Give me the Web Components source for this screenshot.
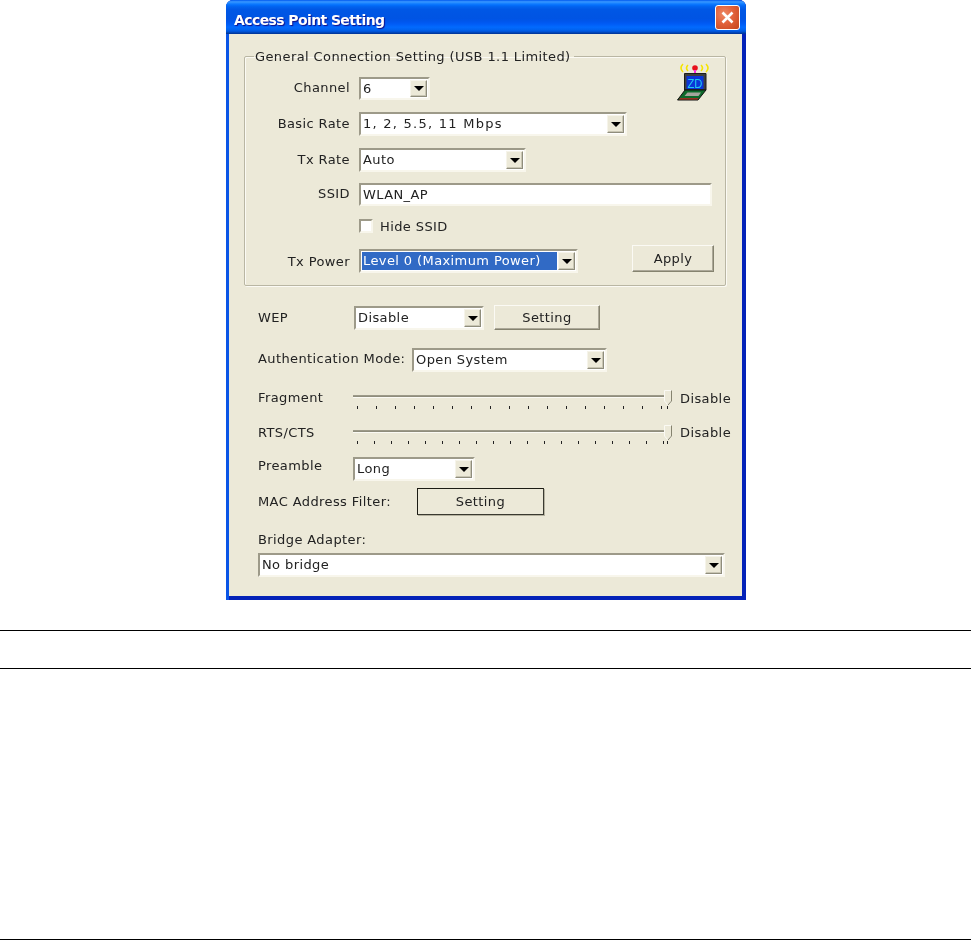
<!DOCTYPE html>
<html>
<head>
<meta charset="utf-8">
<title>Access Point Setting</title>
<style>
  html, body { margin: 0; padding: 0; background: #fff; }
  body { font: 13px "DejaVu Sans", sans-serif; letter-spacing: 0.4px; color: #222; width: 971px; height: 940px; overflow: hidden; }
</style>
</head>
<body>
<doc-page>
  <xp-window caption="Access Point Setting">
    <xp-group legend="General Connection Setting (USB 1.1 Limited)">
      <zd-logo slot="corner"></zd-logo>
      <xp-row label="Channel" labelwidth="104" height="23" top="0"><xp-combo w="71">6</xp-combo></xp-row>
      <xp-row label="Basic Rate" labelwidth="104" height="24" top="12"><xp-combo w="268" style="letter-spacing:1.25px">1, 2, 5.5, 11 Mbps</xp-combo></xp-row>
      <xp-row label="Tx Rate" labelwidth="104" height="24" top="12"><xp-combo w="167">Auto</xp-combo></xp-row>
      <xp-row label="SSID" labelwidth="104" height="23" top="11"><xp-combo w="353" noarrow>WLAN_AP</xp-combo></xp-row>
      <xp-row labelwidth="104" height="24" top="8"><xp-check>Hide SSID</xp-check></xp-row>
      <xp-row label="Tx Power" labelwidth="104" height="24" top="11" lh="25">
        <xp-combo w="219" selected>Level 0 (Maximum Power)</xp-combo>
        <xp-button w="82" h="27" left="54" lift="4">Apply</xp-button>
      </xp-row>
    </xp-group>

    <xp-row label="WEP" labelwidth="96" align="left" height="24" top="20" inset="29" gap="0">
      <xp-combo w="130">Disable</xp-combo>
      <xp-button w="106" h="25" left="10" lift="1">Setting</xp-button>
    </xp-row>
    <xp-row label="Authentication Mode:" labelwidth="154" align="left" height="24" top="18" inset="29" gap="0" lh="21">
      <xp-combo w="195">Open System</xp-combo>
    </xp-row>
    <xp-row label="Fragment" labelwidth="95" align="left" height="22" top="17" inset="29" gap="0" lh="17">
      <xp-slider step="19" textlh="20">Disable</xp-slider>
    </xp-row>
    <xp-row label="RTS/CTS" labelwidth="95" align="left" height="22" top="13" inset="29" gap="0" lh="17">
      <xp-slider step="17" textlh="18">Disable</xp-slider>
    </xp-row>
    <xp-row label="Preamble" labelwidth="95" align="left" height="24" top="11" inset="29" gap="0" lh="17">
      <xp-combo w="122">Long</xp-combo>
    </xp-row>
    <xp-row label="MAC Address Filter:" labelwidth="159" align="left" height="27" top="7" inset="29" gap="0" lh="28">
      <xp-button w="127" h="27" flat>Setting</xp-button>
    </xp-row>
    <xp-row label="Bridge Adapter:" labelwidth="200" align="left" height="18" top="17" inset="29" gap="0" lh="15"></xp-row>
    <xp-row height="24" top="3" inset="29" gap="0"><xp-combo w="467">No bridge</xp-combo></xp-row>
  </xp-window>
  <doc-rules></doc-rules>
</doc-page>

<script>
class DocPage extends HTMLElement {
  constructor() {
    super();
    this.attachShadow({ mode: "open" }).innerHTML = `
      <style>
        :host { display: block; }
        .frame { margin-left: 226px; width: 520px; }
      </style>
      <div class="frame"><slot></slot></div>`;
  }
}

class DocRules extends HTMLElement {
  constructor() {
    super();
    this.attachShadow({ mode: "open" }).innerHTML = `
      <style>
        :host { display: block; width: 971px; margin-left: -226px; margin-top: 30px; }
        div { border-top: 1px solid #000; }
        .a { height: 37px; }
        .b { height: 270px; }
      </style>
      <div class="a"></div><div class="b"></div><div></div>`;
  }
}

class XpWindow extends HTMLElement {
  constructor() {
    super();
    this.attachShadow({ mode: "open" }).innerHTML = `
      <style>
        /* the shot is a scaled-up capture, so everything in it is a little soft */
        :host { display: block; width: 520px; height: 600px; box-sizing: border-box; filter: blur(0.3px); }
        .win {
          height: 600px; box-sizing: border-box; display: flex; flex-direction: column;
          border-radius: 7px 7px 0 0; overflow: hidden; background: #0422b8;
          box-shadow: inset 3px 0 0 #0a55e6, inset -4px 0 0 #0422b8;
        }
        .title {
          height: 34px; flex: none; display: flex; align-items: center; box-sizing: border-box;
          padding: 5px 6px 0 8px; justify-content: space-between;
          background: linear-gradient(#0058ee 0%, #3593ff 5%, #288eff 8%, #127dff 11%, #036ffc 15%, #0262ee 20%, #0057e5 28%, #0054e3 54%, #0055eb 62%, #005bf5 70%, #026afe 80%, #0062ef 88%, #0052d6 93%, #0040ab 97%, #003092 100%);
          color: #fff; font: bold 14px "DejaVu Sans", sans-serif; letter-spacing: -0.6px;
          text-shadow: 1px 1px 1px #0f1089;
        }
        .close {
          width: 25px; height: 25px; box-sizing: border-box; border: 1px solid #fff; border-radius: 3px;
          margin-top: -5px;
          background: radial-gradient(circle at 35% 35%, #ee8a68 0%, #e2623a 45%, #c4441c 100%);
          display: flex; align-items: center; justify-content: center;
        }
        .body {
          flex: 1; margin: 0 4px 4px 3px; background: #ece9d8; display: flex; flex-direction: column;
        }
      </style>
      <div class="win">
        <div class="title">
          <span>${this.getAttribute("caption")}</span>
          <div class="close"><svg width="15" height="15" viewBox="0 0 15 15"><path d="M2.5 2.5 L12.5 12.5 M12.5 2.5 L2.5 12.5" stroke="#fff" stroke-width="2.6" fill="none"/></svg></div>
        </div>
        <div class="body"><slot></slot></div>
      </div>`;
  }
}

class XpGroup extends HTMLElement {
  constructor() {
    super();
    this.attachShadow({ mode: "open" }).innerHTML = `
      <style>
        :host { display: block; margin: 15px 0 0 15px; width: 482px; position: relative; }
        fieldset {
          margin: 0; padding: 13px 0 0 1px; height: 237px; box-sizing: border-box;
          border: 1px solid #b9b6a3; border-radius: 2px;
          box-shadow: inset 1px 1px 0 #fbfaf4, 1px 1px 0 #fbfaf4;
        }
        legend { padding: 0 3px 0 1px; margin-left: 8px; line-height: 15px; }
        .corner { position: absolute; left: 433px; top: 14px; }
      </style>
      <fieldset>
        <legend>${this.getAttribute("legend")}</legend>
        <slot></slot>
      </fieldset>
      <div class="corner"><slot name="corner"></slot></div>`;
  }
}

class XpRow extends HTMLElement {
  constructor() {
    super();
    const label = this.getAttribute("label") || "";
    const lw = this.getAttribute("labelwidth") || 0;
    const gap = this.getAttribute("gap") || 9;
    const align = this.getAttribute("align") === "left" ? "left" : "right";
    const inset = this.getAttribute("inset") || 0;
    const lh = this.getAttribute("lh") || this.getAttribute("height") - 1;
    this.attachShadow({ mode: "open" }).innerHTML = `
      <style>
        :host {
          display: flex; align-items: flex-start; height: ${this.getAttribute("height")}px;
          margin-top: ${this.getAttribute("top")}px; margin-left: ${inset}px;
        }
        .label { width: ${lw}px; flex: none; text-align: ${align}; line-height: ${lh}px; white-space: nowrap; }
        .gap { width: ${gap}px; flex: none; }
        .rest { display: flex; align-items: flex-start; height: 100%; }
      </style>
      <span class="label">${label}</span><span class="gap"></span>
      <div class="rest"><slot></slot></div>`;
  }
}

class XpCombo extends HTMLElement {
  constructor() {
    super();
    const sel = this.hasAttribute("selected");
    const arrow = !this.hasAttribute("noarrow");
    this.attachShadow({ mode: "open" }).innerHTML = `
      <style>
        :host { display: block; width: ${this.getAttribute("w")}px; height: 100%; }
        .box {
          height: 100%; box-sizing: border-box; display: flex; background: #fff;
          border: 2px solid; border-color: #9d9a89 #f8f6ec #f8f6ec #9d9a89; padding: 1px;
        }
        .val {
          flex: 1; min-width: 0; white-space: nowrap; overflow: hidden; padding-left: 1px;
          line-height: 18px; color: #222; margin: 0 1px 0 0;
        }
        .sel { background: #316ac5; color: #fff; }
        .btn {
          width: 17px; flex: none; box-sizing: border-box; background: #ece9d8;
          border: 1px solid; border-color: #f6f4ea #8f8d7c #8f8d7c #f6f4ea;
          box-shadow: inset -1px -1px 0 #c9c6b4;
          display: flex; align-items: center; justify-content: center;
        }
        .tri { width: 0; height: 0; border: 5px solid transparent; border-top: 5px solid #000; border-bottom: 0; }
      </style>
      <div class="box">
        <div class="val${sel ? " sel" : ""}"><slot></slot></div>
        ${arrow ? '<div class="btn"><div class="tri"></div></div>' : ""}
      </div>`;
  }
}

class XpCheck extends HTMLElement {
  constructor() {
    super();
    this.attachShadow({ mode: "open" }).innerHTML = `
      <style>
        :host { display: flex; align-items: center; gap: 7px; height: 100%; }
        i {
          display: block; width: 14px; height: 14px; box-sizing: border-box; background: #fff;
          border: 2px solid; border-color: #9d9a89 #f8f6ec #f8f6ec #9d9a89;
        }
      </style>
      <i></i><span><slot></slot></span>`;
  }
}

class XpButton extends HTMLElement {
  constructor() {
    super();
    const w = this.getAttribute("w"), h = this.getAttribute("h");
    const flat = this.hasAttribute("flat");
    this.attachShadow({ mode: "open" }).innerHTML = `
      <style>
        :host {
          display: block; flex: none; width: ${w}px; height: ${h}px;
          margin-left: ${this.getAttribute("left") || 0}px; margin-top: -${this.getAttribute("lift") || 0}px;
        }
        div {
          height: 100%; box-sizing: border-box; display: flex; align-items: center; justify-content: center;
          background: #ece9d8; color: #222;
          ${flat
            ? "border: 1px solid #1c1c14; border-right-color:#3a3a30; border-bottom-color:#3a3a30; box-shadow: 1px 1px 0 #b5b29f;"
            : "border: 1px solid; border-color: #fbfaf4 #85836f #85836f #fbfaf4; box-shadow: inset -1px -1px 0 #aca899;"}
        }
      </style>
      <div><slot></slot></div>`;
  }
}

class XpSlider extends HTMLElement {
  constructor() {
    super();
    const step = +this.getAttribute("step");
    let ticks = "";
    for (let x = 4; x < 312; x += step) ticks += `<b style="left:${x}px"></b>`;
    ticks += `<b style="left:314px"></b>`;
    this.attachShadow({ mode: "open" }).innerHTML = `
      <style>
        :host { display: flex; align-items: flex-start; }
        .track { width: 317px; height: 22px; position: relative; flex: none; }
        .groove { position: absolute; left: 0; right: 0; top: 6px; height: 1px; background: #9d9a89; box-shadow: 0 1px 0 #8f8d7c, 0 2px 0 #fbfaf4; }
        b { position: absolute; top: 17px; width: 1px; height: 3px; background: #222; }
        svg { position: absolute; left: 311px; top: 1px; }
        .text { margin-left: 10px; line-height: ${this.getAttribute("textlh")}px; }
      </style>
      <div class="track">
        <div class="groove"></div>
        ${ticks}
        <svg width="9" height="16" viewBox="0 0 9 16"><path d="M0.5 0.5 H7.5 V11 L4 15 L0.5 11 Z" fill="#ece9d8" stroke="#fbfaf4"/><path d="M7.5 0.5 V11 L4 15" fill="none" stroke="#85836f"/></svg>
      </div>
      <span class="text"><slot></slot></span>`;
  }
}

class ZdLogo extends HTMLElement {
  constructor() {
    super();
    this.attachShadow({ mode: "open" }).innerHTML = `
      <style>:host { display: block; width: 34px; height: 40px; }</style>
      <svg width="34" height="40" viewBox="0 0 34 40">
        <g fill="none" stroke="#f5e400" stroke-width="1.6">
          <path d="M6 1 Q2 5 6 9"/><path d="M11 2 Q8 5 11 8"/>
          <path d="M24 2 Q27 5 24 8"/><path d="M29 1 Q33 5 29 9"/>
        </g>
        <circle cx="18" cy="5" r="2.8" fill="#e8101c"/>
        <rect x="17" y="7" width="2" height="4" fill="#ff2de0"/>
        <path d="M7.5 10.5 H29 V27 H7.5 Z" fill="#3f3f3d" stroke="#1c1c1c"/>
        <rect x="9.5" y="13" width="17" height="13" fill="#0a35d8"/>
        <text x="18" y="24.5" text-anchor="middle" fill="#22c8ee" font-family="Liberation Sans, sans-serif" font-size="13" letter-spacing="0" textLength="15" lengthAdjust="spacingAndGlyphs">ZD</text>
        <path d="M8 27 H29 L21 37 H0.5 Z" fill="#0c6a2a" stroke="#111"/>
        <path d="M10.5 29.5 H24 L21.5 33 H7.5 Z" fill="#a5a59c"/>
        <path d="M2 36.5 H20.5 L21.5 35.2 H3 Z" fill="#c02020"/>
      </svg>`;
  }
}

customElements.define("doc-page", DocPage);
customElements.define("doc-rules", DocRules);
customElements.define("xp-window", XpWindow);
customElements.define("xp-group", XpGroup);
customElements.define("xp-row", XpRow);
customElements.define("xp-combo", XpCombo);
customElements.define("xp-check", XpCheck);
customElements.define("xp-button", XpButton);
customElements.define("xp-slider", XpSlider);
customElements.define("zd-logo", ZdLogo);
</script>
</body>
</html>
